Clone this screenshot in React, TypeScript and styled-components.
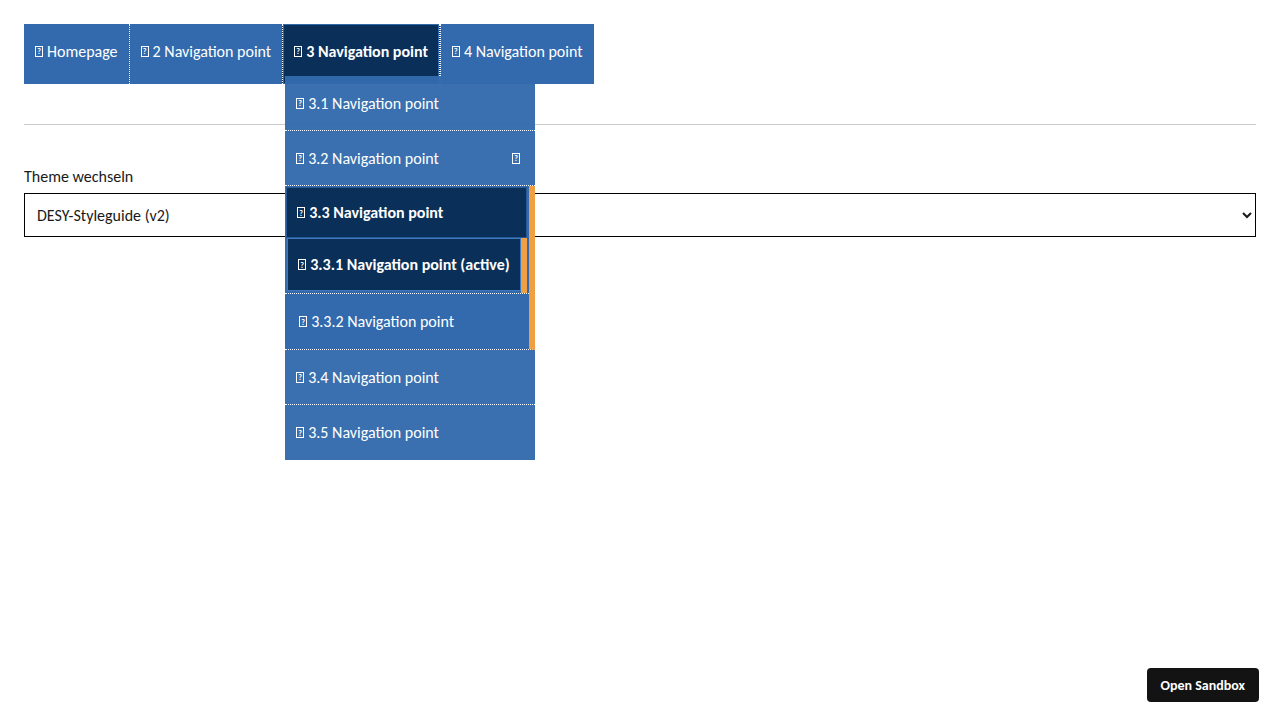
import styled, { createGlobalStyle } from "styled-components";

const GlobalStyle = createGlobalStyle`
  *, *::before, *::after { box-sizing: border-box; }
  body {
    margin: 0;
    background: #ffffff;
    font-family: Carlito, Lato, "Liberation Sans", sans-serif;
    color: #1a1a1a;
  }
`;

const Page = styled.div`
  position: relative;
  min-height: 720px;
  padding: 24px;
`;

const NavBar = styled.ul`
  display: flex;
  list-style: none;
  margin: 0;
  padding: 0;
  width: max-content;
  background: #326aad;
`;

const NavItem = styled.li<{ $first?: boolean; $open?: boolean }>`
  position: relative;
  display: flex;
  align-items: center;
  height: 60px;
  padding: 0 11px 6px 11px;
  border-left: ${(p) => (p.$first ? "none" : "1px dotted #ffffff")};
  color: #ffffff;
  font-size: 16px;
  font-weight: ${(p) => (p.$open ? 700 : 400)};
  white-space: nowrap;
  cursor: pointer;
  ${(p) =>
    p.$open &&
    `
    border-right: 1px dotted #ffffff;
    background: #0a3059;
    box-shadow: inset 0 0 0 1px #326aad;
  `}
`;

const Tofu = styled.span`
  display: inline-flex;
  align-items: center;
  justify-content: center;
  flex: none;
  width: 8px;
  height: 11px;
  margin-right: 4px;
  border: 1px solid currentColor;
  font-size: 8px;
  line-height: 1;
  font-weight: 700;
`;

const ItemText = styled.span`
  display: inline-flex;
  align-items: center;
`;

const Dropdown = styled.ul`
  position: absolute;
  top: 52px;
  left: 2px;
  width: 250px;
  margin: 0;
  padding: 0;
  list-style: none;
  z-index: 5;
  font-weight: 400;
`;

const DropItem = styled.li<{ $last?: boolean }>`
  display: flex;
  align-items: center;
  justify-content: space-between;
  height: 55px;
  padding: 0 11px 0 11px;
  background: rgba(50, 106, 173, 0.96);
  border-bottom: ${(p) => (p.$last ? "none" : "1px dotted #ffffff")};
  color: #ffffff;
  font-size: 16px;
`;

const Group = styled.li`
  display: flex;
  flex-direction: column;
  background: #326aad;
  border-right: 6px solid #f0a042;
  border-bottom: 1px dotted #ffffff;
  color: #ffffff;
  font-size: 16px;
`;

const GroupHead = styled.div`
  display: flex;
  align-items: center;
  height: 51px;
  margin: 1px 2px 0 1px;
  padding: 0 10px;
  background: #0a3059;
  border: 1px solid #2a5a95;
  font-weight: 700;
`;

const ActiveRow = styled.div`
  display: flex;
  height: 55px;
  margin: 0 2px;
  padding: 0 0 2px 0;
  border-right: 6px solid #f0a042;
`;

const ActiveLink = styled.div`
  flex: 1;
  display: flex;
  align-items: center;
  margin-right: 2px;
  padding: 0 10px;
  background: #0a3059;
  border: 1px solid #3f78bb;
  font-weight: 700;
`;

const Child = styled.div`
  display: flex;
  align-items: center;
  height: 56px;
  padding: 0 14px;
  border-top: 1px dotted #ffffff;
`;

const Rule = styled.hr`
  margin: 40px 0 0 0;
  border: none;
  border-top: 1px solid #cccccc;
`;

const Field = styled.div`
  display: flex;
  flex-direction: column;
  margin-top: 42px;
`;

const Label = styled.label`
  font-size: 16px;
  color: #1a1a1a;
  margin-bottom: 7px;
`;

const Select = styled.select`
  height: 44px;
  width: 100%;
  padding: 0 8px;
  border: 1px solid #000000;
  border-radius: 0;
  background: #ffffff;
  font-family: inherit;
  font-size: 16px;
  color: #1a1a1a;
`;

const SandboxButton = styled.button`
  position: fixed;
  right: 21px;
  bottom: 18px;
  height: 34px;
  padding: 0 14px;
  border: none;
  border-radius: 4px;
  background: #131313;
  color: #ffffff;
  font-family: inherit;
  font-size: 14px;
  font-weight: 700;
  cursor: pointer;
`;

const topItems = ["Homepage", "2 Navigation point", "3 Navigation point", "4 Navigation point"];

export default function App() {
  return (
    <Page>
      <GlobalStyle />
      <NavBar>
        {topItems.map((label, i) => (
          <NavItem key={label} $first={i === 0} $open={i === 2}>
            <Tofu>?</Tofu>
            {label}
            {i === 2 && (
              <Dropdown>
                <DropItem>
                  <ItemText>
                    <Tofu>?</Tofu>3.1 Navigation point
                  </ItemText>
                </DropItem>
                <DropItem>
                  <ItemText>
                    <Tofu>?</Tofu>3.2 Navigation point
                  </ItemText>
                  <Tofu>?</Tofu>
                </DropItem>
                <Group>
                  <GroupHead>
                    <Tofu>?</Tofu>3.3 Navigation point
                  </GroupHead>
                  <ActiveRow>
                    <ActiveLink>
                      <Tofu>?</Tofu>3.3.1 Navigation point (active)
                    </ActiveLink>
                  </ActiveRow>
                  <Child>
                    <Tofu>?</Tofu>3.3.2 Navigation point
                  </Child>
                </Group>
                <DropItem>
                  <ItemText>
                    <Tofu>?</Tofu>3.4 Navigation point
                  </ItemText>
                </DropItem>
                <DropItem $last>
                  <ItemText>
                    <Tofu>?</Tofu>3.5 Navigation point
                  </ItemText>
                </DropItem>
              </Dropdown>
            )}
          </NavItem>
        ))}
      </NavBar>
      <Rule />
      <Field>
        <Label>Theme wechseln</Label>
        <Select defaultValue="desy2">
          <option value="desy2">DESY-Styleguide (v2)</option>
          <option value="desy1">DESY-Styleguide (v1)</option>
        </Select>
      </Field>
      <SandboxButton>Open Sandbox</SandboxButton>
    </Page>
  );
}
